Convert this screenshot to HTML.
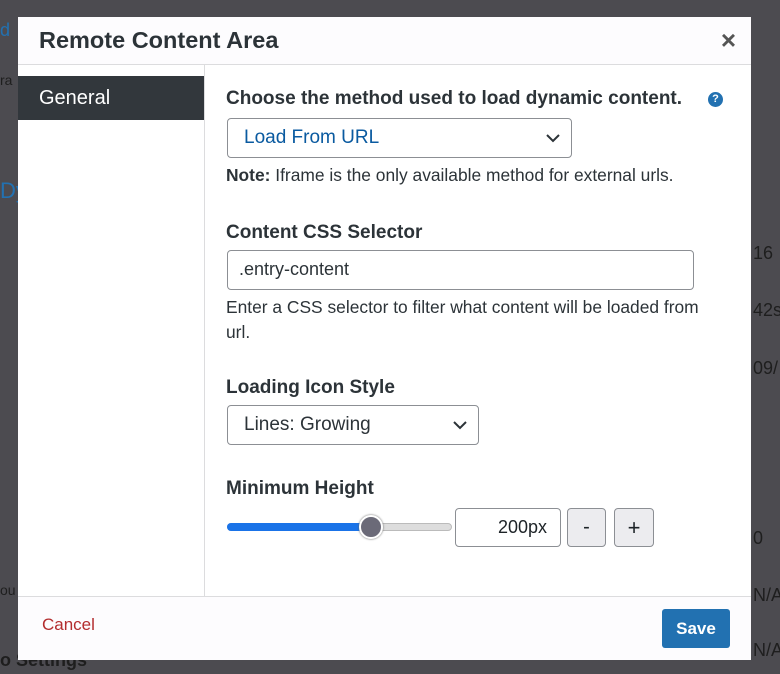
<!DOCTYPE html>
<html><head><style>
body{margin:0;width:780px;height:674px;background:#4c4b50;font-family:"Liberation Sans",Arial,sans-serif;position:relative;overflow:hidden;color:#1d2327}
.bg{position:absolute;color:#1e1e1e;font-size:18px}
.modal{position:absolute;left:18px;top:17px;width:733px;height:642px;background:#fff;}
.hdr{height:47px;border-bottom:1px solid #dcdcde;background:#fdfcfe;position:relative}
.hdr h1{margin:0;position:absolute;left:21px;top:10px;font-size:23.5px;font-weight:bold;color:#2c3338}
.x{position:absolute;right:15px;top:8px;font-size:26px;font-weight:bold;color:#555}
.side{position:absolute;left:0;top:48px;width:186px;height:531px;border-right:1px solid #dcdcde}
.gen{position:absolute;left:0;top:11px;width:186px;height:44px;background:#32373c;color:#fff;font-size:20px;line-height:44px;padding-left:21px;box-sizing:border-box}
.lbl{position:absolute;font-size:19px;font-weight:bold;color:#2c3338;white-space:nowrap}
.box{position:absolute;border:1px solid #8c8f94;border-radius:4px;box-sizing:border-box;font-size:19px;background:#fff}
.txt{position:absolute;font-size:17.4px;color:#2c3338;white-space:nowrap;line-height:25px}
.chev{position:absolute;right:10px;top:11px}
.ftr{position:absolute;left:0;top:579px;width:733px;height:63px;border-top:1px solid #dcdcde;background:#fdfcfe}
</style></head><body>
<div class="bg" style="left:0;top:20px;color:#2271b1">d</div>
<div class="bg" style="left:0;top:72px;font-size:14px">ra</div>
<div class="bg" style="left:0;top:178px;color:#2271b1;font-size:22px">Dy</div>
<div class="bg" style="left:0;top:582px;font-size:14px">ou</div>
<div class="bg" style="left:0;top:650px;font-weight:bold">o Settings</div>
<div class="bg" style="left:753px;top:243px">16</div>
<div class="bg" style="left:753px;top:300px">42s</div>
<div class="bg" style="left:753px;top:358px">09/</div>
<div class="bg" style="left:753px;top:528px">0</div>
<div class="bg" style="left:753px;top:585px">N/A</div>
<div class="bg" style="left:753px;top:640px">N/A</div>
<div class="modal">
 <div class="hdr"><h1>Remote Content Area</h1><div class="x">×</div></div>
 <div class="side"><div class="gen">General</div></div>
 <div class="lbl" style="left:208px;top:71px">Choose the method used to load dynamic content.</div>
 <div style="position:absolute;left:690px;top:75px;width:15px;height:15px;border-radius:50%;background:#2271b1;color:#fff;font-size:11px;font-weight:bold;text-align:center;line-height:15px">?</div>
 <div class="box" style="left:209px;top:101px;width:345px;height:40px;color:#0a5aa0;padding:8px 16px">Load From URL
  <svg class="chev" width="16" height="16" viewBox="0 0 16 16"><path d="M2 5l6 6 6-6" fill="none" stroke="#2c3338" stroke-width="2"/></svg></div>
 <div class="txt" style="left:208px;top:146px"><b>Note:</b> Iframe is the only available method for external urls.</div>
 <div class="lbl" style="left:208px;top:205px">Content CSS Selector</div>
 <div class="box" style="left:209px;top:233px;width:467px;height:40px;padding:8px 11px;color:#2c3338;font-size:18px">.entry-content</div>
 <div class="txt" style="left:208px;top:278px">Enter a CSS selector to filter what content will be loaded from<br>url.</div>
 <div class="lbl" style="left:208px;top:360px">Loading Icon Style</div>
 <div class="box" style="left:209px;top:388px;width:252px;height:40px;padding:8px 16px;color:#2c3338">Lines: Growing
  <svg class="chev" width="16" height="16" viewBox="0 0 16 16"><path d="M2 5l6 6 6-6" fill="none" stroke="#2c3338" stroke-width="2"/></svg></div>
 <div class="lbl" style="left:208px;top:461px">Minimum Height</div>
 <div style="position:absolute;left:209px;top:506px;width:225px;height:8px;border-radius:4px;background:#ddd;border:1px solid #bbb;box-sizing:border-box"></div>
 <div style="position:absolute;left:209px;top:506px;width:145px;height:8px;border-radius:4px;background:#1a73e8"></div>
 <div style="position:absolute;left:341px;top:498px;width:24px;height:24px;border-radius:50%;background:#6b6a78;border:2px solid #fff;box-shadow:0 0 2px #666;box-sizing:border-box"></div>
 <div class="box" style="left:437px;top:491px;width:106px;height:39px;text-align:right;padding:8px 13px;font-size:18px">200px</div>
 <div class="box" style="left:549px;top:491px;width:39px;height:39px;background:#ececef;text-align:center;line-height:37px;font-size:20px">-</div>
 <div class="box" style="left:596px;top:491px;width:40px;height:39px;background:#ececef;text-align:center;line-height:37px;font-size:22px">+</div>
 <div class="ftr">
  <div style="position:absolute;left:24px;top:18px;color:#b32d2e;font-size:17px">Cancel</div>
  <div style="position:absolute;left:644px;top:12px;width:68px;height:39px;background:#2271b1;border-radius:3px;color:#fff;font-size:17px;font-weight:bold;text-align:center;line-height:39px">Save</div>
 </div>
</div>
</body></html>
